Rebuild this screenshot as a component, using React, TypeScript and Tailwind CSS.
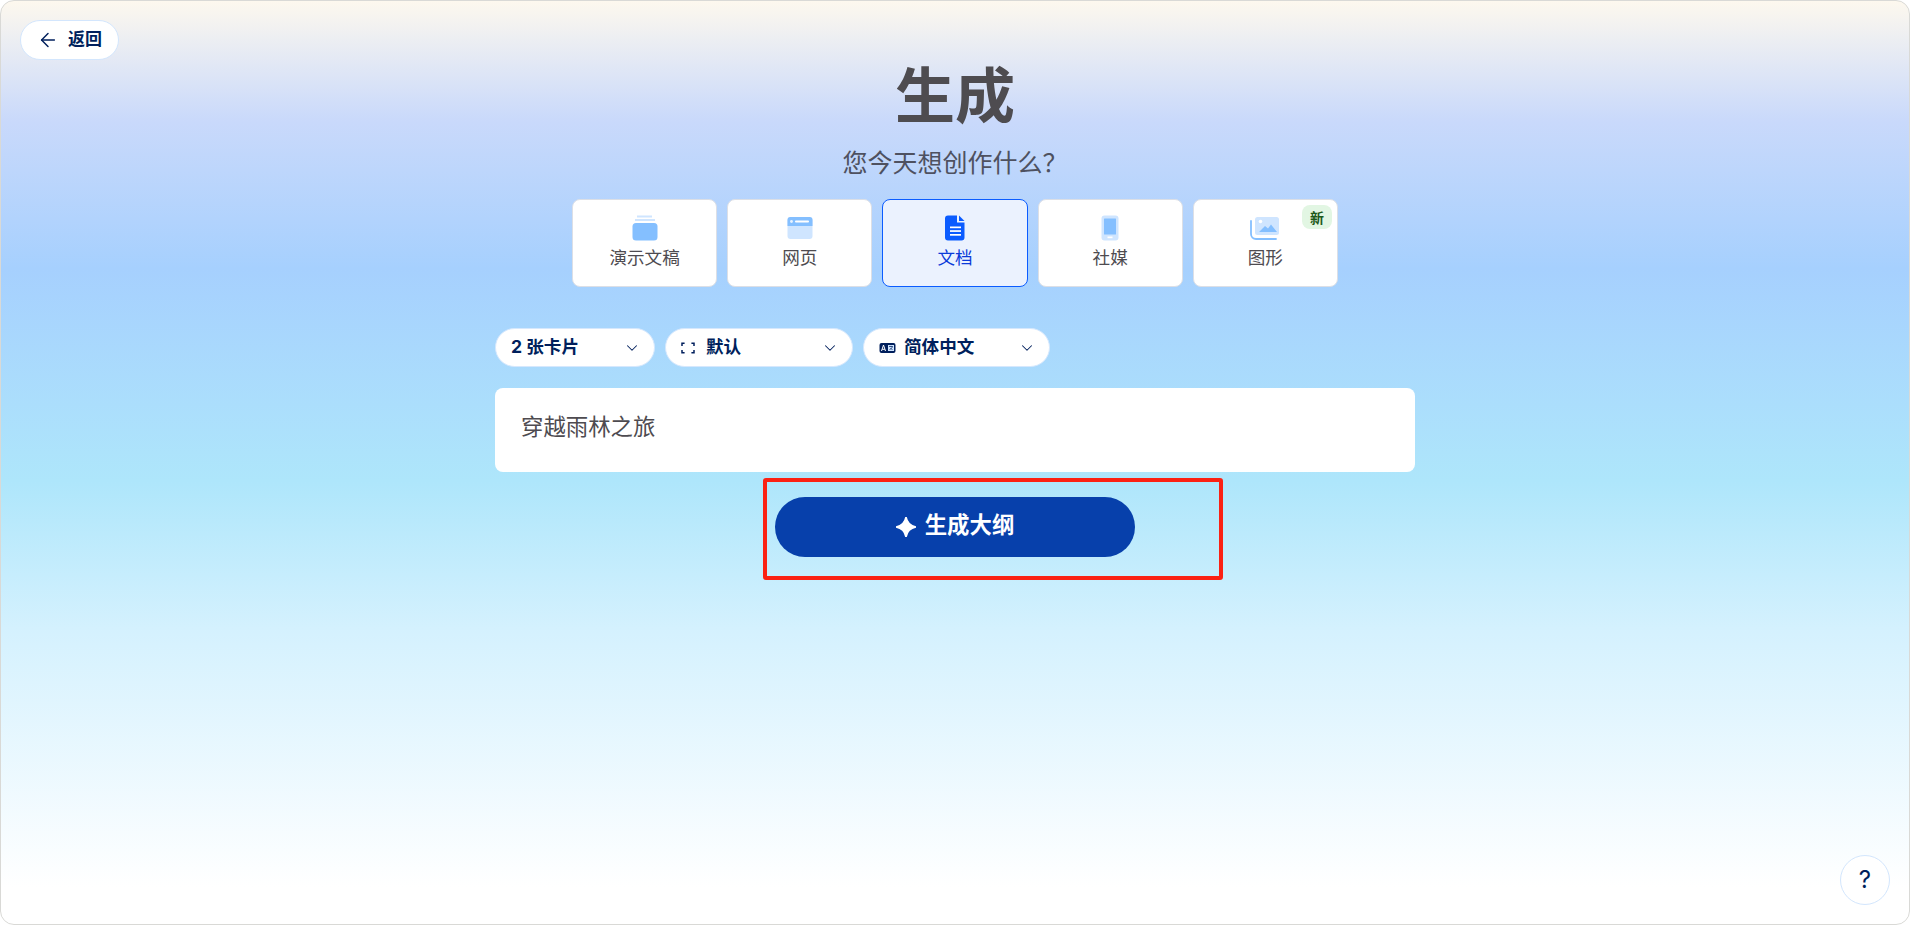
import { ArrowLeft, ChevronDown } from "lucide-react";
import type { ReactNode } from "react";

const CJK = "font-['Inter','Noto_Sans_CJK_SC',sans-serif]";

function SlidesIcon() {
  return (
    <svg width="26" height="26" viewBox="0 0 26 26">
      <rect x="5" y="0.5" width="15" height="2" fill="#cfe5ff" />
      <rect x="3" y="4" width="20" height="2" fill="#cfe5ff" />
      <rect x="0.5" y="8" width="25" height="17.5" rx="3.5" fill="#84bfff" />
    </svg>
  );
}

function WebIcon() {
  return (
    <svg width="26" height="24" viewBox="0 0 26 24">
      <rect x="0.5" y="1" width="25" height="22" rx="3" fill="#cfe5ff" />
      <path d="M0.5 10V4a3 3 0 0 1 3-3h19a3 3 0 0 1 3 3v6z" fill="#84bfff" />
      <circle cx="4.5" cy="5.5" r="1.4" fill="#e8f3ff" />
      <rect x="8" y="4.6" width="14" height="1.8" rx="0.9" fill="#fff" />
    </svg>
  );
}

function DocIcon() {
  return (
    <svg width="20" height="26" viewBox="0 0 20 26">
      <path d="M3 0.5h9v7h7.5V22.5a3 3 0 0 1-3 3H3a3 3 0 0 1-3-3V3.5a3 3 0 0 1 3-3z" fill="#0b5cff" />
      <path d="M14 0.5l5.5 5.5H14z" fill="#0b5cff" />
      <rect x="5" y="11.5" width="11" height="1.7" fill="#fff" />
      <rect x="5" y="15.2" width="11" height="1.7" fill="#fff" />
      <rect x="5" y="19" width="11" height="1.7" fill="#fff" />
    </svg>
  );
}

function PhoneIcon() {
  return (
    <svg width="18" height="26" viewBox="0 0 18 26">
      <rect x="0.5" y="0.5" width="17" height="25" rx="3" fill="#cfe5ff" />
      <rect x="3" y="3.5" width="12" height="16" rx="0.5" fill="#84bfff" />
      <rect x="6.5" y="21.5" width="5" height="1.7" fill="#fff" />
    </svg>
  );
}

function ImageIcon() {
  return (
    <svg width="30" height="24" viewBox="0 0 30 24">
      <path d="M1 5v13a5 5 0 0 0 5 5h20" fill="none" stroke="#84bfff" strokeWidth="1.8" strokeLinecap="round" />
      <rect x="5" y="1" width="24" height="18" rx="2.5" fill="#cfe5ff" />
      <circle cx="10.5" cy="5.5" r="1.8" fill="#fff" />
      <path d="M9 16l6-6 3 2.5 3-4 6 7.5z" fill="#84bfff" />
    </svg>
  );
}

function FitIcon() {
  return (
    <svg width="14" height="12" viewBox="0 0 14 12" fill="none" stroke="#001f5c" strokeWidth="1.5">
      <path d="M1 4V1.2h2.6M10.4 1.2H13V4M13 8v2.8h-2.6M3.6 10.8H1V8" />
    </svg>
  );
}

function LangIcon() {
  return (
    <svg width="17" height="12" viewBox="0 0 17 12">
      <rect x="0.5" y="1" width="16" height="10" rx="2" fill="#001f5c" />
      <path d="M2.5 9l2-6 2 6M3.2 7.3h2.6" fill="none" stroke="#fff" strokeWidth="1" />
      <rect x="9" y="3" width="6" height="6" fill="#cfe5ff" />
      <path d="M10 4.5h4M12 3.8v1M10.5 8l3-3M13.5 8l-2-2" fill="none" stroke="#001f5c" strokeWidth="0.7" />
    </svg>
  );
}

function SparkIcon() {
  return (
    <svg width="20" height="20" viewBox="0 0 20 20">
      <path d="M10 0C11 5.5 14.5 9 20 10C14.5 11 11 14.5 10 20C9 14.5 5.5 11 0 10C5.5 9 9 5.5 10 0z" fill="#fff" stroke="#fff" strokeWidth="1.6" strokeLinejoin="round" />
    </svg>
  );
}

const TYPES: { label: string; icon: ReactNode; active?: boolean; isNew?: boolean }[] = [
  { label: "演示文稿", icon: <SlidesIcon /> },
  { label: "网页", icon: <WebIcon /> },
  { label: "文档", icon: <DocIcon />, active: true },
  { label: "社媒", icon: <PhoneIcon /> },
  { label: "图形", icon: <ImageIcon />, isNew: true },
];

function TypeCard({ label, icon, active, isNew }: (typeof TYPES)[number]) {
  return (
    <button
      className={
        active
          ? "relative flex h-[88px] w-[145.2px] flex-col items-center rounded-lg border border-[#0b5cff] bg-[#ebf2fe] pt-[15px] text-[#0b3bd9]"
          : "relative flex h-[88px] w-[145.2px] flex-col items-center rounded-lg border border-[#dcdfe6] bg-white pt-[15px] text-[#4e4b50]"
      }
    >
      <span className="flex h-[26px] items-center justify-center">{icon}</span>
      <span className="mt-[4px] text-[17.6px] leading-[26px]">{label}</span>
      {isNew && (
        <span className="absolute top-[5px] right-[5px] flex h-[24px] w-[30px] items-center justify-center rounded-lg bg-[#e2f6e3] text-[14px] font-bold text-[#1d5a1a]">
          新
        </span>
      )}
    </button>
  );
}

function Pill({ width, icon, label }: { width: string; icon?: ReactNode; label: string }) {
  return (
    <button className={`flex h-[39px] ${width} items-center rounded-full border border-[#d6e8fd] bg-white pr-[13px] pl-[15px] text-[17.6px] font-bold text-[#001f5c]`}>
      {icon && <span className="flex w-[25px] justify-start">{icon}</span>}
      <span>{label}</span>
      <ChevronDown className="ml-auto size-[18px]" strokeWidth={1.4} />
    </button>
  );
}

export default function App() {
  return (
    <div className={`${CJK} relative h-[925px] w-[1910px] overflow-hidden rounded-[14px] border border-[#d9d9d6] bg-[linear-gradient(180deg,#fdf8ee_0%,#c9d9fb_13%,#a6d0fe_29%,#aee6fb_52%,#d4f1fe_68%,#ffffff_96%)]`}>
      <button className="absolute top-[19px] left-[19px] flex h-[40px] w-[99px] items-center rounded-full border border-[#d3e6fd] bg-white pl-[16px] text-[17px] font-bold text-[#001f5c]">
        <ArrowLeft className="size-[22px]" strokeWidth={1.6} />
        <span className="ml-[9px]">返回</span>
      </button>

      <main className="mx-auto flex w-[920px] flex-col items-center pt-[50px]">
        <h1 className="text-[60px] leading-[90px] font-bold text-[#4e4c50]">生成</h1>
        <p className="mt-[4px] text-[25px] leading-[36px] text-[#4e5160]">您今天想创作什么？</p>

        <div className="mt-[18px] flex gap-[10px]">
          {TYPES.map((t) => (
            <TypeCard key={t.label} {...t} />
          ))}
        </div>

        <div className="mt-[41px] flex w-full gap-[10px]">
          <Pill width="w-[160px]" label="2 张卡片" />
          <Pill width="w-[188px]" icon={<FitIcon />} label="默认" />
          <Pill width="w-[187px]" icon={<LangIcon />} label="简体中文" />
        </div>

        <div className="mt-[21px] h-[84px] w-full rounded-lg bg-white px-[26px] pt-[22px] text-[22.4px] leading-[33px] text-[#4e4b50]">
          穿越雨林之旅
        </div>

        <button className="mt-[25px] flex h-[60px] w-[360px] items-center justify-center rounded-full bg-[#0740ab] text-[22.4px] font-bold text-white">
          <span className="mr-[9px]"><SparkIcon /></span>
          <span className="mb-[4px]">生成大纲</span>
        </button>
      </main>

      {/* annotation box from the screenshot */}
      <div className="absolute top-[477px] left-[762px] h-[102px] w-[460px] rounded-[3px] border-4 border-[#fb2113]" />

      <button className="absolute top-[854px] left-[1839px] flex size-[50px] items-center justify-center rounded-full border border-[#d3e6fd] bg-white text-[24px] text-[#001f5c]">
        ?
      </button>
    </div>
  );
}
